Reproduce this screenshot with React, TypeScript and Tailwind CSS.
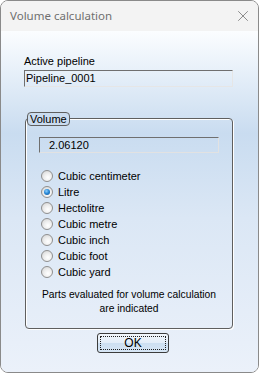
import { X } from "lucide-react"

const units = ["Cubic centimeter", "Litre", "Hectolitre", "Cubic metre", "Cubic inch", "Cubic foot", "Cubic yard"]

function Radio({ checked }: { checked: boolean }) {
  return (
    <span className="flex h-[12px] w-[12px] items-center justify-center rounded-full border border-[#8f8f8f] bg-[radial-gradient(circle_at_60%_65%,#ffffff_0%,#f0f0f0_40%,#cfcfcf_100%)]">
      {checked && (
        <span className="h-[6px] w-[6px] rounded-full bg-[radial-gradient(circle_at_40%_35%,#8fd0ff_0%,#2a8ad8_45%,#0d4f94_100%)]" />
      )}
    </span>
  )
}

export default function App() {
  return (
    <div
      className="flex h-[373px] w-[259px] flex-col overflow-hidden rounded-lg border border-[#8a8a8a] text-[11px] text-black"
      style={{ fontFamily: '"Liberation Sans", Arial, sans-serif' }}
    >
      <div className="flex h-[30px] shrink-0 items-center justify-between bg-[#f3f3f3] pl-[9px] pr-[6px]">
        <span className="text-[11.5px] text-[#6f6f6f]" style={{ fontFamily: '"Noto Sans", "Open Sans", sans-serif' }}>
          Volume calculation
        </span>
        <X size={18} strokeWidth={1} className="text-[#6a6a6a]" />
      </div>

      <div className="flex flex-1 flex-col bg-[linear-gradient(180deg,#fbfdff_0%,#c9dcf0_30%,#dbe7f5_55%,#ebf1fa_100%)] pl-[23px] pr-[25px] pt-[24px]">
        <div className="leading-[13px]">Active pipeline</div>
        <div className="mt-[2px] flex h-[17px] w-[209px] items-center border border-t-[#6f6f6f] border-l-[#6f6f6f] border-r-[#e6e6e6] border-b-[#e6e6e6] pl-[1px]">
          Pipeline_0001
        </div>

        <div className="relative ml-[1px] mt-[31px] flex h-[211px] w-[208px] flex-col rounded-[4px] border border-[#5f5f5f] shadow-[1px_1px_0_#ffffff,inset_1px_1px_0_#ffffff]">
          <span className="absolute -top-[7px] left-[1px] rounded-[4px] border border-[#5f5f5f] bg-[#cadcf0] px-[2px] leading-[12px]">
            Volume
          </span>
          <div className="ml-[13px] mt-[18px] flex h-[16px] w-[180px] items-center border border-t-[#6f6f6f] border-l-[#6f6f6f] border-r-[#e2e2e2] border-b-[#e2e2e2] pl-[9px]">
            2.06120
          </div>

          <div className="ml-[15px] mt-[15px] flex flex-col">
            {units.map((u, i) => (
              <div key={u} className="flex h-[16px] items-center gap-[5px]">
                <Radio checked={i === 1} />
                <span>{u}</span>
              </div>
            ))}
          </div>

          <div className="mt-[8px] text-center text-[10.3px] leading-[14px]">
            Parts evaluated for volume calculation
            <br />
            are indicated
          </div>
        </div>

        <button className="ml-[73px] mt-[4px] flex h-[20px] w-[72px] items-center justify-center rounded-[3px] border border-[#3c3c3c] bg-[linear-gradient(180deg,#f2f7fc_0%,#e3edf8_50%,#cddff1_51%,#d7e6f5_100%)] p-[2px]">
          <span className="flex h-full w-full items-center justify-center border border-dotted border-[#202020] text-[12px]">
            OK
          </span>
        </button>
      </div>
    </div>
  )
}
